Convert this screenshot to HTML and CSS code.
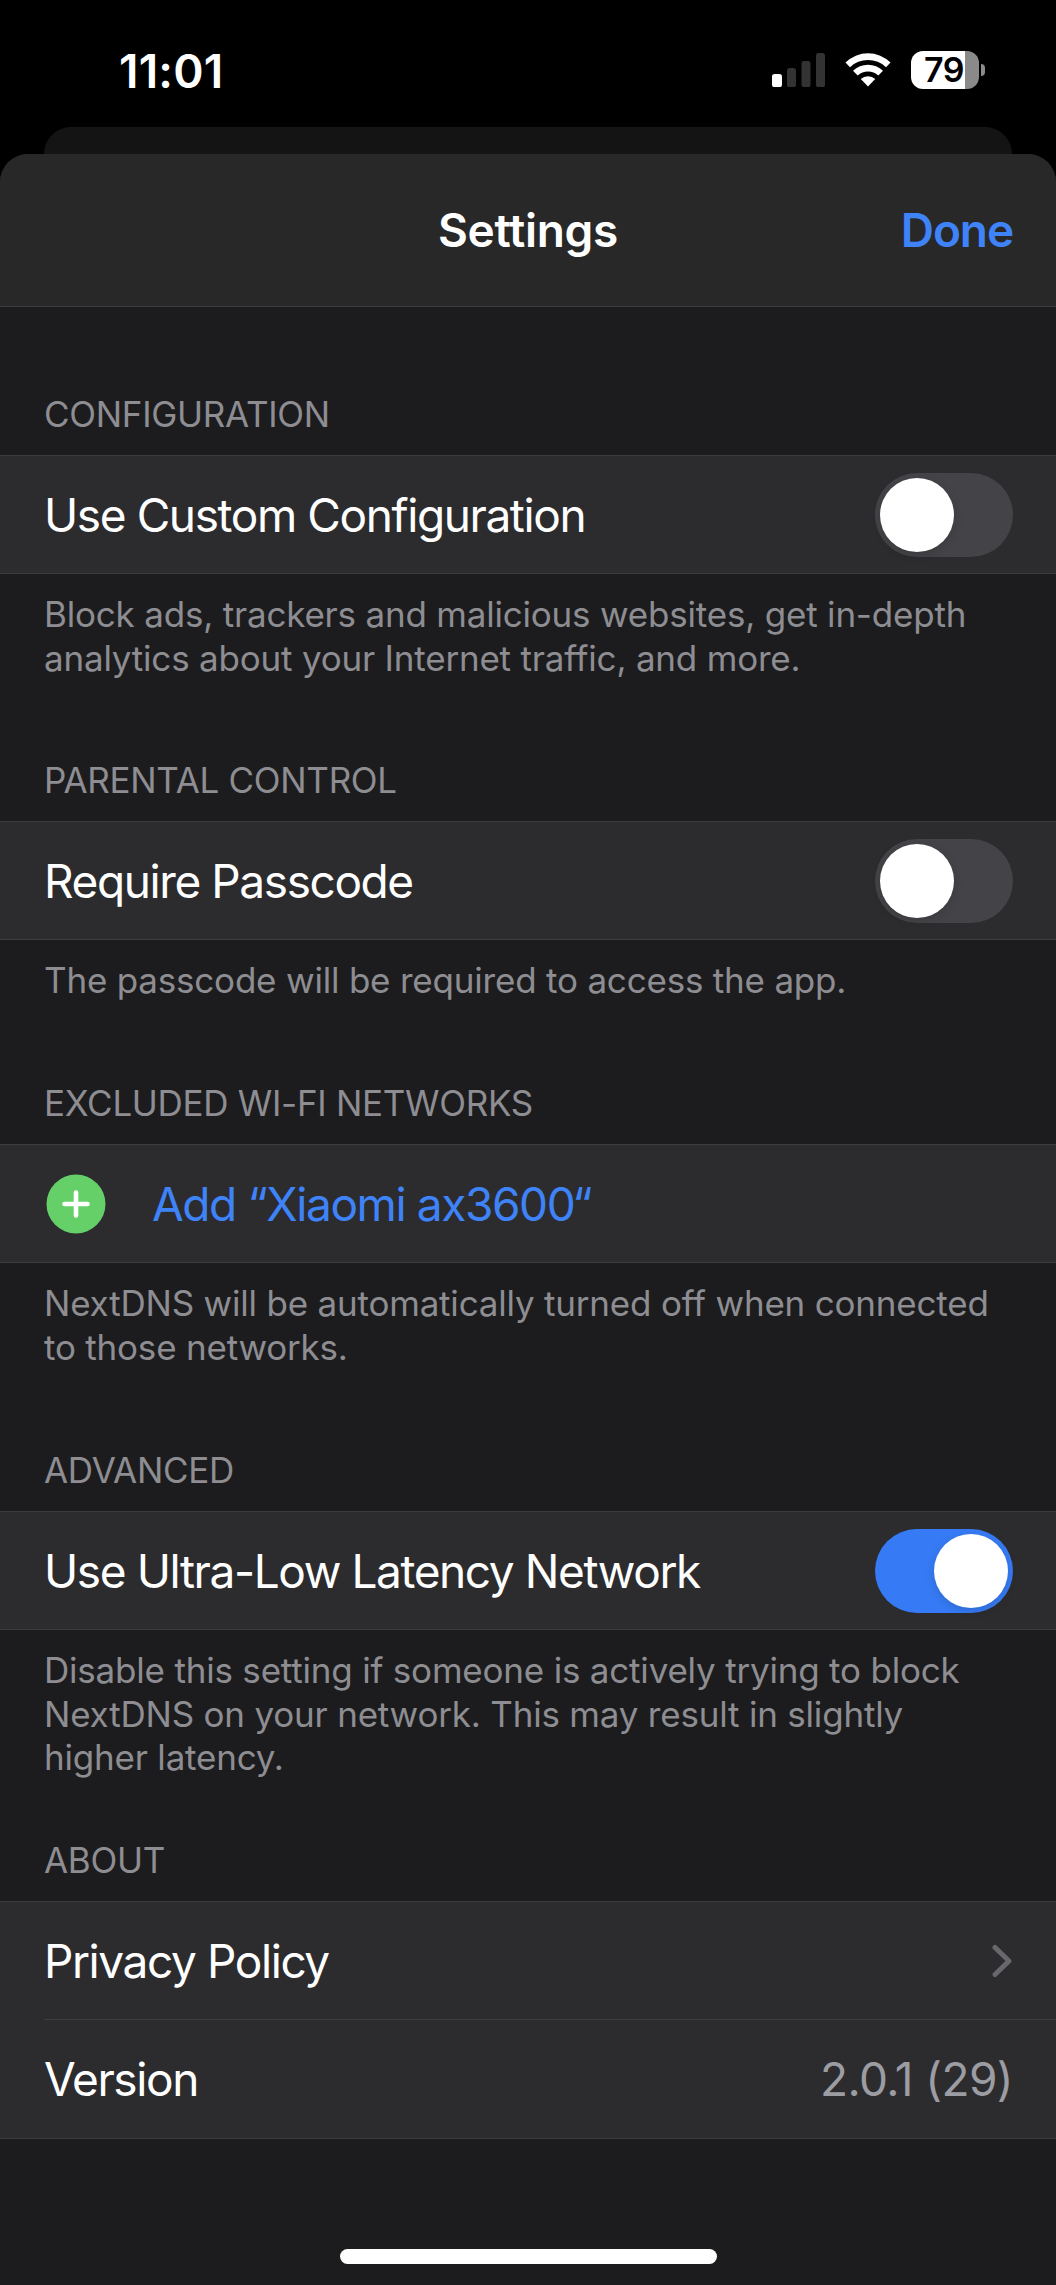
FILE: index.html
```
<!DOCTYPE html>
<html lang="en">
<head>
  <meta charset="UTF-8" />
  <meta name="viewport" content="width=device-width, initial-scale=1.0"/>
  <title>Settings</title>
  <link rel="stylesheet" href="styles.css">
</head>
<body>

  <div class="status-bar">
    <span class="time">11:01</span>
    <div class="status-icons">
      <svg class="signal" width="54" height="36" viewBox="0 0 54 36">
        <rect x="0" y="21" width="10" height="13" rx="2.6" fill="#fff"/>
        <rect x="15" y="15" width="9" height="19" rx="2.6" fill="#333"/>
        <rect x="29.500" y="8" width="9" height="26" rx="2.6" fill="#333"/>
        <rect x="44" y="0" width="9" height="34" rx="2.6" fill="#333"/>
      </svg>
      <svg class="wifi" width="46" height="34" viewBox="0 0 46 34">
        <path d="M0.500 9.500 A32 32 0 0 1 45.500 9.500 L41 14.200 A26 26 0 0 0 5 14.200 Z" fill="#fff"/>
        <path d="M8 17.800 A21.500 21.500 0 0 1 38 17.800 L33.300 22.600 A15 15 0 0 0 12.700 22.600 Z" fill="#fff"/>
        <path d="M15.800 26 A10.500 10.500 0 0 1 30.200 26 L23 33.500 Z" fill="#fff"/>
      </svg>
      <div class="battery">
        <span class="battery-level">79</span>
      </div>
      <span class="battery-cap"></span>
    </div>
  </div>

  <div class="back-card"></div>

  <div class="sheet">
    <header class="navbar">
      <h1>Settings</h1>
      <a class="done" href="#">Done</a>
    </header>

    <main>
      <section class="group configuration">
        <h2>CONFIGURATION</h2>
        <div class="rows">
          <div class="row">
            <span class="label">Use Custom Configuration</span>
            <span class="switch"></span>
          </div>
        </div>
        <p>Block ads, trackers and malicious websites, get in-depth<br>analytics about your Internet traffic, and more.</p>
      </section>

      <section class="group parental">
        <h2>PARENTAL CONTROL</h2>
        <div class="rows">
          <div class="row">
            <span class="label">Require Passcode</span>
            <span class="switch"></span>
          </div>
        </div>
        <p>The passcode will be required to access the app.</p>
      </section>

      <section class="group networks">
        <h2>EXCLUDED WI-FI NETWORKS</h2>
        <div class="rows">
          <div class="row">
            <svg class="add" width="60" height="60" viewBox="0 0 60 60">
              <circle cx="30" cy="30" r="29.500" fill="#65d068"/>
              <path d="M30 18.500 V41.500 M18.500 30 H41.500" stroke="#fff" stroke-width="4.600" stroke-linecap="round"/>
            </svg>
            <a class="label add-link" href="#">Add “Xiaomi ax3600“</a>
          </div>
        </div>
        <p>NextDNS will be automatically turned off when connected<br>to those networks.</p>
      </section>

      <section class="group advanced">
        <h2>ADVANCED</h2>
        <div class="rows">
          <div class="row">
            <span class="label">Use Ultra-Low Latency Network</span>
            <span class="switch on"></span>
          </div>
        </div>
        <p>Disable this setting if someone is actively trying to block<br>NextDNS on your network. This may result in slightly<br>higher latency.</p>
      </section>

      <section class="group about">
        <h2>ABOUT</h2>
        <div class="rows">
          <div class="row">
            <span class="label">Privacy Policy</span>
            <svg class="chevron" width="20" height="34" viewBox="0 0 20 34">
              <path d="M3 3.500 L17 17 L3 30.500" fill="none" stroke="#68686c" stroke-width="5" stroke-linecap="round" stroke-linejoin="round"/>
            </svg>
          </div>
          <div class="row">
            <span class="label">Version</span>
            <span class="value">2.0.1 (29)</span>
          </div>
        </div>
      </section>
    </main>

    <div class="home-indicator"></div>
  </div>

</body>
</html>
```

FILE: styles.css
```
* {
  box-sizing: border-box;
}
body {
  margin: 0;
  height: 2285px;
  overflow: hidden;
  background: #000;
  color: #fff;
  font-family: Inter, "Liberation Sans", sans-serif;
  display: flex;
  flex-direction: column;
}
h1, h2, p {
  margin: 0;
  font-weight: 400;
}
a {
  text-decoration: none;
  color: #3f83f8;
}

/* status bar */
.status-bar {
  height: 127px;
  display: flex;
  justify-content: space-between;
  align-items: flex-start;
  padding: 51px 71px 0 119px;
}
.time {
  font-size: 46px;
  line-height: 40px;
  font-weight: 600;
  letter-spacing: 0.2px;
}
.status-icons {
  display: flex;
  align-items: flex-start;
}
.signal {
  margin: 2px 19px 0 0;
}
.wifi {
  margin: 2px 20px 0 0;
}
.battery {
  width: 68px;
  height: 38px;
  padding-right: 2px;
  border-radius: 12px;
  background: linear-gradient(to right, #fff 79%, #8a8a8a 79%);
  display: flex;
  justify-content: center;
}
.battery-level {
  color: #000;
  font-size: 34px;
  line-height: 38px;
  font-weight: 600;
  letter-spacing: -0.5px;
}
.battery-cap {
  width: 4px;
  height: 12px;
  margin: 13px 0 0 2px;
  border-radius: 0 5px 5px 0;
  background: #8a8a8a;
}

/* sheets */
.back-card {
  height: 60px;
  flex: none;
  margin: 0 44px -33px;
  border-radius: 27px 27px 0 0;
  background: #141414;
}
.sheet {
  flex: 1;
  border-radius: 28px 28px 0 0;
  background: #1c1c1e;
  overflow: hidden;
  display: flex;
  flex-direction: column;
}
.navbar {
  height: 153px;
  display: grid;
  grid-template-columns: 1fr auto 1fr;
  align-items: center;
  padding: 0 43px;
  background: #282828;
  border-bottom: 1px solid #3d3d40;
}
h1 {
  grid-column: 2;
  font-size: 46px;
  font-weight: 600;
  letter-spacing: -0.3px;
}
.done {
  justify-self: end;
  font-size: 46px;
  font-weight: 600;
  letter-spacing: -1.1px;
}

/* groups */
h2 {
  padding: 0 44px;
  font-size: 35px;
  line-height: 43px;
  letter-spacing: -0.3px;
  color: #8d8d92;
}
.group {
  display: flex;
  flex-direction: column;
}
.rows {
  margin-top: 19px;
  background: #2c2c2e;
  border-top: 1px solid #3d3d40;
  border-bottom: 1px solid #3d3d40;
}
.row {
  height: 117px;
  display: flex;
  align-items: center;
  justify-content: space-between;
  padding: 0 43px 0 44px;
}
.row + .row {
  height: 119px;
  margin-left: 44px;
  padding-left: 0;
  border-top: 1px solid #3d3d40;
}
.label {
  font-size: 46px;
  letter-spacing: -1.4px;
}
.value {
  font-size: 46px;
  letter-spacing: -0.6px;
  color: #9c9ca3;
}
.group p {
  padding: 19px 44px 0;
  font-size: 35px;
  line-height: 43.5px;
  letter-spacing: -0.2px;
  color: #8d8d92;
}
.configuration {
  padding-top: 86px;
}
.parental {
  padding-top: 79px;
}
.networks {
  padding-top: 79.5px;
}
.advanced {
  padding-top: 80px;
}
.about {
  padding-top: 59.5px;
}

/* controls */
.switch {
  width: 138px;
  height: 84px;
  padding: 5px;
  border-radius: 42px;
  background: #444448;
  display: flex;
}
.switch::before {
  content: "";
  width: 74px;
  height: 74px;
  border-radius: 50%;
  background: #fff;
  box-shadow: 0 3px 10px rgba(0, 0, 0, 0.15);
}
.switch.on {
  justify-content: flex-end;
  background: #367bf5;
}
.add {
  margin: 0 46px 0 2px;
}
.add-link {
  flex: 1;
}
.chevron {
  margin-right: 1px;
}

.home-indicator {
  width: 377px;
  height: 15px;
  margin: auto auto 21px;
  border-radius: 8px;
  background: #fff;
}
```
